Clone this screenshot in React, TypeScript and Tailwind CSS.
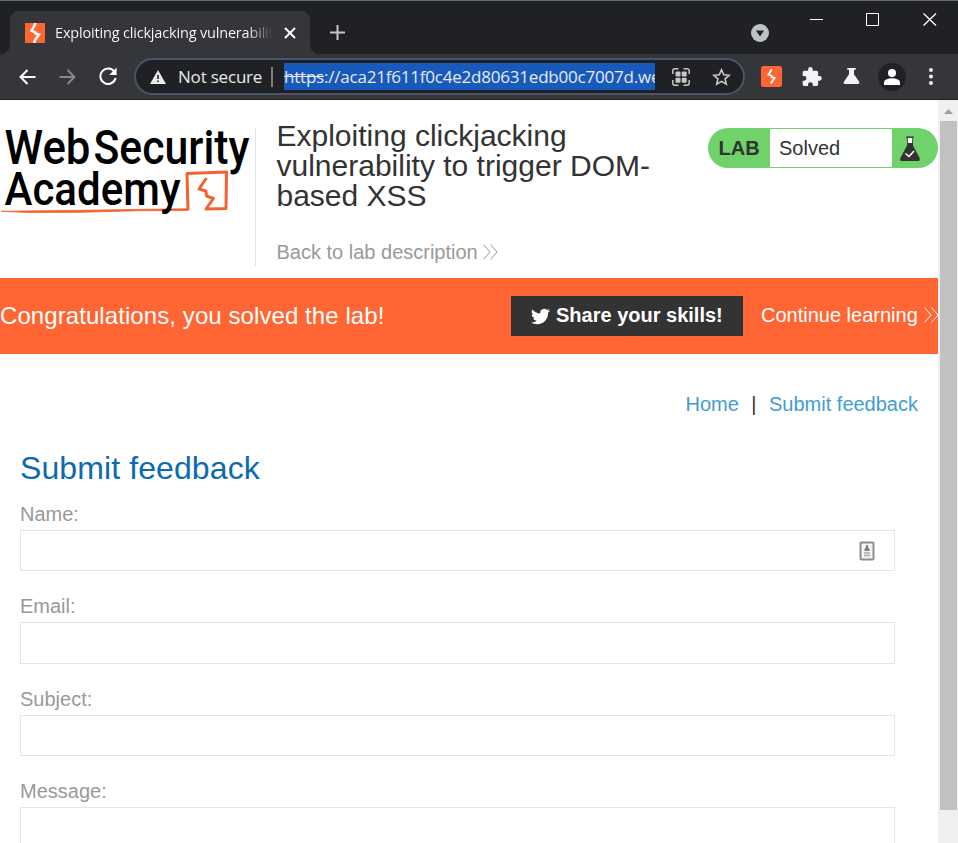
import React from "react";

const arial = "font-['Liberation_Sans',Arial,sans-serif]";

function Bolt() {
  return (
    <svg width="20" height="20" viewBox="0 0 20 20" className="shrink-0">
      <rect width="20" height="20" fill="#ff6633" />
      <path d="M10.500-1 9.800 2 6.500 7.600 10.600 9.500V10.500L14 11.600 10 17 9 21" fill="none" stroke="#fff" strokeWidth="2.500" />
    </svg>
  );
}

function SmallBolt() {
  return (
    <svg width="21" height="21" viewBox="0 0 21 21" className="shrink-0">
      <rect width="21" height="21" rx="2.5" fill="#ff6633" />
      <path d="M10.800 3.200 7.500 8.500 10.700 10V11L13.500 12 9.700 17.500" fill="none" stroke="#fff" strokeWidth="1.900" />
    </svg>
  );
}

function Chevrons({ color }: { color: string }) {
  return (
    <svg width="15" height="16" viewBox="0 0 15 16" fill="none" stroke={color} strokeWidth="1" className="shrink-0">
      <path d="M.5.5 7 8 .5 15.5M7.5.5 14 8 7.5 15.5" />
    </svg>
  );
}

function TabBar() {
  return (
    <div className="flex h-[54px] shrink-0 border-t border-[#6b6f73] bg-[#202124]">
      <div className="flex h-[53px] w-[320px] shrink-0 pt-[10px]">
        <svg width="10" height="43" viewBox="0 0 10 43" className="shrink-0">
          <path d="M10 33v10H0c6 0 10-4 10-10Z" fill="#35363a" />
        </svg>
        <div className="flex w-[300px] items-center rounded-t-[9px] bg-[#35363a] pl-[15px]">
          <Bolt />
          <div className="ml-[10px] w-[218px] overflow-hidden bg-linear-to-r from-white from-88% to-transparent bg-clip-text font-['Open_Sans','Noto_Sans',sans-serif] text-[14.5px] tracking-[-0.18px] whitespace-nowrap text-transparent">
            Exploiting clickjacking vulnerability
          </div>
          <svg width="12" height="12" viewBox="0 0 12 12" stroke="#fff" strokeWidth="2" className="ml-[11px]">
            <path d="M1 1 11 11M11 1 1 11" />
          </svg>
        </div>
        <svg width="10" height="43" viewBox="0 0 10 43" className="shrink-0">
          <path d="M0 33v10H10C4 43 0 39 0 33Z" fill="#35363a" />
        </svg>
      </div>
      <svg width="15" height="15" viewBox="0 0 15 15" stroke="#c4c6c8" strokeWidth="2" className="mt-[24px] ml-[10px]">
        <path d="M7.5 0V15M0 7.5H15" />
      </svg>
      <div className="grow" />
      <svg width="18" height="18" viewBox="0 0 18 18" className="mt-[23px] mr-[41px]">
        <circle cx="9" cy="9" r="9" fill="#bdc1c6" />
        <path d="M5 6.5H13L9 12.5Z" fill="#202124" />
      </svg>
      <svg width="127" height="13" viewBox="0 0 127 13" fill="none" stroke="#fff" className="mt-[12px] mr-[21px]">
        <path d="M0 6.5H13" />
        <path d="M56.5.5H68.5V12.5H56.5Z" />
        <path d="M113.5.5 126 12.5M126 .5 113.5 12.5" strokeWidth="1.3" />
      </svg>
    </div>
  );
}

function Toolbar() {
  return (
    <div className="flex h-[46px] shrink-0 items-center border-b border-[#232427] bg-[#35363a] pl-[19px]">
      <svg width="17" height="16" viewBox="0 0 17 16" fill="none" stroke="#fff" strokeWidth="2">
        <path d="M16.5 8H2M8.5 1 1.5 8 8.5 15" />
      </svg>
      <svg width="17" height="16" viewBox="0 0 17 16" fill="none" stroke="#85878b" strokeWidth="2" className="ml-[23px]">
        <path d="M.5 8H15M8.5 1 15.5 8 8.5 15" />
      </svg>
      <svg width="18" height="18" viewBox="0 0 18 18" fill="none" stroke="#fff" strokeWidth="2" className="mb-px ml-[23px]">
        <path d="M15.5 5A7.7 7.7 0 1 0 16.6 11" />
        <path d="M17.6.5V8H10.2Z" fill="#fff" stroke="none" />
      </svg>
      <div className="ml-[17px] flex h-[37px] w-[611px] items-center rounded-full border-2 border-[#4b5569] bg-[#202124] pl-[14px] font-['Open_Sans','Noto_Sans',sans-serif] text-[17px] text-[#e8eaed]">
        <svg width="16" height="14" viewBox="0 0 16 14" className="shrink-0">
          <path d="M8 0 16 14H0Z" fill="#e8eaed" />
          <path d="M7.2 5H8.8V9H7.2ZM7.2 10.4H8.8V12H7.2Z" fill="#202124" />
        </svg>
        <span className="ml-[12px] w-[84px] shrink-0 tracking-[-0.2px] whitespace-nowrap">Not secure</span>
        <div className="ml-[9px] h-5 w-[2px] shrink-0 bg-[#7b7d80]" />
        <div className="ml-[11px] h-[27px] w-[371px] shrink-0 overflow-hidden bg-[#185abc] leading-[27px] tracking-[-0.21px] whitespace-nowrap">
          <span className="line-through">https</span>://aca21f611f0c4e2d80631edb00c7007d.we
        </div>
        <svg width="18" height="18" viewBox="0 0 18 18" fill="none" stroke="#c4c6c8" strokeWidth="1.5" className="ml-[17px] shrink-0">
          <path d="M.8 6V3Q.8.8 3 .8H6.500M11.500 .8H15Q17.2.8 17.2 3V6M17.2 12V15Q17.2 17.2 15 17.2H11.500M6.500 17.2H3Q.8 17.2.8 15V12" />
          <g fill="#c4c6c8" stroke="none">
            <rect x="3.500" y="3.500" width="5" height="5" rx="1" /><rect x="9.700" y="3.500" width="5" height="5" rx="1" />
            <rect x="3.500" y="9.700" width="5" height="5" rx="1" /><rect x="9.700" y="9.700" width="5" height="5" rx="1" />
          </g>
        </svg>
        <svg width="19" height="18" viewBox="0 0 19 18" fill="none" stroke="#c9cbcd" strokeWidth="1.6" className="ml-[22px] shrink-0">
          <path d="M9.5 1.8 11.8 6.8 17.2 7.3 13.1 10.9 14.3 16.2 9.5 13.4 4.7 16.2 5.9 10.9 1.8 7.3 7.2 6.8Z" />
        </svg>
      </div>
      <div className="ml-[16px]"><SmallBolt /></div>
      <svg width="20" height="20" viewBox="1.5 1 21.5 22" className="ml-[20px]" fill="#f1f3f4">
        <path d="M20.5 11H19V7c0-1.100-.9-2-2-2h-4V3.500a2.500 2.500 0 0 0-5 0V5H4c-1.100 0-2 .9-2 2v3.800h1.500a2.700 2.700 0 0 1 0 5.400H2V20c0 1.100.9 2 2 2h3.800v-1.500a2.700 2.700 0 0 1 5.400 0V22H17c1.100 0 2-.9 2-2v-4h1.500a2.500 2.500 0 0 0 0-5Z" />
      </svg>
      <svg width="17" height="16" viewBox="0 0 17 16" className="mb-px ml-[21px]" fill="#f1f3f4">
        <path d="M4.200 0H12.800V1.800H11V6.300L16 13.500Q17 16 15 16H2Q0 16 1 13.500L6 6.300V1.800H4.200Z" />
      </svg>
      <svg width="28" height="28" viewBox="0 0 28 28" className="ml-[18px]">
        <circle cx="14" cy="14" r="14" fill="#202124" />
        <circle cx="14" cy="10" r="4" fill="#fff" />
        <path d="M6 22V19.500C6 16.500 11 15.300 14 15.300S22 16.500 22 19.500V22Z" fill="#fff" />
      </svg>
      <svg width="4" height="17" viewBox="0 0 4 17" fill="#f1f3f4" className="ml-[23px]">
        <circle cx="2" cy="2" r="2" /><circle cx="2" cy="8.500" r="2" /><circle cx="2" cy="15" r="2" />
      </svg>
    </div>
  );
}

function Logo() {
  return (
    <svg width="255" height="120" viewBox="0 100 255 120" className="shrink-0">
      <g fontFamily="Roboto, sans-serif" fontWeight="500" fontSize="47.500" fill="#000">
        <text x="4.500" y="164" textLength="86" lengthAdjust="spacingAndGlyphs">Web</text>
        <text x="93.500" y="164" textLength="156" lengthAdjust="spacingAndGlyphs">Security</text>
      </g>
      <path d="M1 211.300 100 210 188 208.700V210.500L140 210.700 80 212.300 30 212.600Z" fill="#f26333" stroke="#f26333" strokeWidth=".8" />
      <path d="M188 210 187 173.500 226.500 172 226 208.500 206 209 213.500 198.500 206.500 196 206 191 199 189 206.500 178" fill="none" stroke="#f26333" strokeWidth="3" strokeLinejoin="round" />
      <text x="4.500" y="204.500" textLength="176" lengthAdjust="spacingAndGlyphs" fontFamily="Roboto, sans-serif" fontWeight="500" fontSize="47">Academy</text>
    </svg>
  );
}

function LabStatus() {
  return (
    <div className="mt-[28px] flex h-10 w-[230px] items-center overflow-hidden rounded-full bg-[#6fd26b] text-[20px] text-[#333]">
      <span className="w-[62px] pl-[10.5px] font-bold">LAB</span>
      <span className="h-[38px] w-[122px] bg-white pl-[9px] leading-[38px]">Solved</span>
      <svg width="20" height="25" viewBox="0 0 20 25" className="mt-px ml-[8px]">
        <path d="M7.500 1.500V9L10 10 12.500 9V1.500Z" fill="#fff" stroke="#333" strokeWidth=".8" />
        <path d="M6 .5H14V1.700H6ZM7 7H13V9.500L19.600 22Q20.500 25 18 25H2Q-.5 25 .4 22L7 9.500Z" fill="#333" />
        <path d="M5.500 17.500 9 20.500 14 15" fill="none" stroke="#fff" strokeWidth="1.600" />
      </svg>
    </div>
  );
}

function Field({ label, gap, height, children }: { label: string; gap: number; height: number; children?: React.ReactNode }) {
  return (
    <label className="block" style={{ paddingTop: gap }}>
      <span className="block h-[28px] text-[20px] leading-[24px] text-[#999]">{label}</span>
      <div className="flex w-[875px] items-center justify-end border border-[#e4e4e4] bg-white pr-[19px]" style={{ height }}>{children}</div>
    </label>
  );
}

export default function App() {
  return (
    <div className={`flex h-[843px] w-[958px] flex-col overflow-hidden bg-white ${arial}`}>
      <TabBar />
      <Toolbar />
      <div className="flex min-h-0 grow">
        <main className="w-[938px] overflow-hidden">
          <header className="flex h-[178px]">
            <div className="flex h-[166px] w-[256px]">
              <div className="w-[255px] shrink-0"><Logo /></div>
              <div className="mt-[28px] h-[138px] w-px shrink-0 bg-[#e4e4e4]" />
            </div>
            <div className="w-[452px] pt-[21px] pl-[20.5px]">
              <h1 className="text-[30px] leading-[30px] text-[#333]">
                Exploiting clickjacking<br />vulnerability to trigger DOM-<br />based XSS
              </h1>
              <a className="mt-[29px] flex items-center gap-[5px] text-[20px] leading-[24px] text-[#999]">
                Back to lab description <Chevrons color="#999" />
              </a>
            </div>
            <LabStatus />
          </header>
          <section className="flex h-[76px] items-center bg-[#ff6633] text-white">
            <p className="w-[511px] shrink-0 text-[24px] tracking-[0.08px] whitespace-nowrap">Congratulations, you solved the lab!</p>
            <button className="flex h-10 w-[232px] shrink-0 items-center bg-[#333] pb-[2px] pl-[20px] text-[20px] font-bold whitespace-nowrap">
              <svg width="19" height="17" viewBox="0 2 24 20" fill="#fff" className="mt-[3px] mr-[6px] shrink-0">
                <path d="M23.950 4.570a10 10 0 0 1-2.820.770 4.960 4.960 0 0 0 2.160-2.720c-.950.550-2 .950-3.130 1.180a4.920 4.920 0 0 0-8.380 4.480C7.690 8.090 4.070 6.130 1.640 3.160a4.920 4.920 0 0 0 1.520 6.570 4.900 4.900 0 0 1-2.230-.610v.060a4.920 4.920 0 0 0 3.950 4.830 5 5 0 0 1-2.210.080 4.940 4.940 0 0 0 4.600 3.420A9.870 9.870 0 0 1 0 19.540a13.990 13.990 0 0 0 7.560 2.210c9.050 0 14-7.500 14-13.980 0-.210 0-.420-.020-.630A9.940 9.940 0 0 0 24 4.590Z" />
              </svg>
              Share your skills!
            </button>
            <a className="ml-[18px] flex shrink-0 items-center gap-[6px] pb-[2px] text-[20px] whitespace-nowrap">
              Continue learning <Chevrons color="#fff" />
            </a>
          </section>
          <nav className="flex h-[100px] items-center justify-end pr-[20px] text-[20px] text-[#419dd1]">
            <a>Home</a>
            <span className="mx-[12.5px] text-[#333]">|</span>
            <a>Submit feedback</a>
          </nav>
          <form className="pl-[20px]">
            <h2 className="-mt-[6px] h-[40px] text-[32px] leading-[40px] tracking-[0.1px] text-[#0b6ab0]">Submit feedback</h2>
            <Field label="Name:" gap={14} height={41}>
              <svg width="16" height="20" viewBox="0 0 16 20">
                <rect x="1.500" y="1.500" width="13" height="17" rx="1" fill="#f4f4f4" stroke="#8d8d8d" strokeWidth="2" />
                <path d="M7 4H9V6L10.500 8V10H5.500V8L7 6Z" fill="#808080" />
                <path d="M5 12H11M5 14.500H11" stroke="#aaa" strokeWidth="1.500" />
              </svg>
            </Field>
            <Field label="Email:" gap={23} height={42} />
            <Field label="Subject:" gap={23} height={41} />
            <Field label="Message:" gap={23} height={60} />
          </form>
        </main>
        <aside className="flex w-[20px] flex-col bg-[#f0f0f0]">
          <svg width="20" height="21" viewBox="0 0 20 21"><path d="M6 14 10.500 9 15 14Z" fill="#a0a0a0" /></svg>
          <div className="ml-[2px] h-[689px] w-[17px] bg-[#c1c1c1]" />
        </aside>
      </div>
    </div>
  );
}
